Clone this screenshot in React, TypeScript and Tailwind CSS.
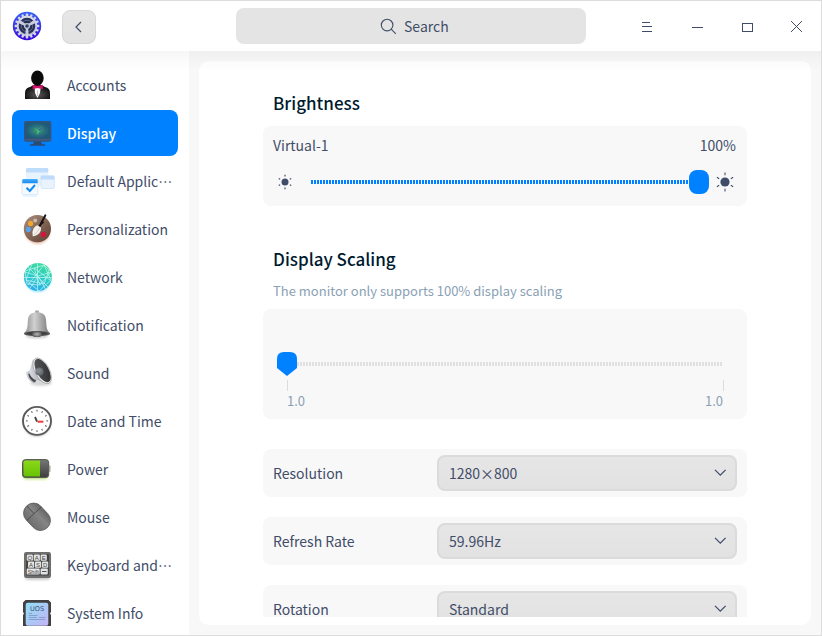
import type { ReactNode } from 'react';

const INK = '#414d68';

function Logo() {
  const teeth = Array.from({ length: 16 }, (_, i) => i * 22.5);
  return (
    <svg width="30" height="30" viewBox="-15 -15 30 30">
      <defs>
        <linearGradient id="logoBlue" x1="0" y1="0" x2="0" y2="1">
          <stop offset="0" stopColor="#3a63f5" />
          <stop offset="1" stopColor="#3b0ad8" />
        </linearGradient>
        <linearGradient id="logoGray" x1="0" y1="0" x2="0" y2="1">
          <stop offset="0" stopColor="#e0e2ea" />
          <stop offset="1" stopColor="#b4b8cc" />
        </linearGradient>
      </defs>
      <circle r="14.2" fill="url(#logoBlue)" />
      <circle r="10.4" fill="url(#logoGray)" />
      {teeth.map((a) => (
        <rect key={a} x="-1.2" y="-12.4" width="2.4" height="3.4" rx="0.6" fill="#d3d6e4" transform={`rotate(${a})`} />
      ))}
      <circle r="8.3" fill="#262f58" />
      <circle r="5.8" fill="none" stroke="#5b6488" strokeWidth="1" />
      {[60, 180, 300].map((a) => (
        <path key={a} d="M-1 0 L-1.7 -9 H1.7 L1 0Z" fill="#c9cddd" transform={`rotate(${a})`} />
      ))}
      <circle r="3" fill="#c4c8d8" />
      <circle r="1.8" fill="#343d66" />
    </svg>
  );
}

function AccountsIcon() {
  return (
    <>
      <defs>
        <radialGradient id="suit" cx=".5" cy=".7" r=".6">
          <stop offset="0" stopColor="#5a5a5a" />
          <stop offset="1" stopColor="#0c0c0c" />
        </radialGradient>
      </defs>
      <path d="M5 37V31Q5 26 10 25L14.5 22.5H20.5L25 25Q30 26 30 31V37Z" fill="url(#suit)" />
      <path d="M14.5 25H20.8L20 31L17.5 36L15 31Z" fill="#fff" />
      <ellipse cx="17.4" cy="16" rx="6.3" ry="7.6" fill="#0b0b0b" />
      <path d="M12.7 22.7L17.5 24L22.8 22.7V27.3L17.5 26L12.7 27.3Z" fill="#d3146c" />
      <path d="M17.5 28.5V34" stroke="#bbb" strokeWidth=".8" />
    </>
  );
}

function DisplayIcon() {
  return (
    <>
      <defs>
        <radialGradient id="screen">
          <stop offset="0" stopColor="#43a066" />
          <stop offset=".55" stopColor="#2a727f" />
          <stop offset="1" stopColor="#1d5a78" />
        </radialGradient>
      </defs>
      <path d="M14 31H21L22 34.3H25V35.8H10V34.3H13Z" fill="#2b4b75" />
      <rect x="4" y="11" width="27.3" height="20.8" rx="2" fill="#35537a" />
      <rect x="5.7" y="12.7" width="24" height="15.6" fill="url(#screen)" />
      <path d="M13 17L17.5 20L22.5 16L20 21L17 25L17.3 21Z" fill="#44c270" />
      <path d="M18 20L22.5 16L20 21Z" fill="#3d58b8" />
      <path d="M4.3 29.8H31" stroke="#4c5e7e" strokeWidth="1" />
    </>
  );
}

function DefaultAppsIcon() {
  return (
    <>
      <defs>
        <linearGradient id="appBar" x1="0" y1="0" x2="0" y2="1">
          <stop offset="0" stopColor="#45b2fb" />
          <stop offset="1" stopColor="#1a86f2" />
        </linearGradient>
      </defs>
      <rect x="6" y="10" width="22.3" height="18" rx="1.5" fill="#e8f3fe" />
      <path d="M6 14.6V11.4Q6 10 7.4 10H27Q28.3 10 28.3 11.4V14.6Z" fill="#c0dcfb" />
      <rect x="21" y="18" width="13.4" height="12.5" rx="1.4" fill="#e9f3fe" stroke="#cfe2f8" strokeWidth=".8" />
      <path d="M20.6 21.6V19Q20.6 17.6 22 17.6H33Q34.4 17.6 34.4 19V21.6Z" fill="#bedbfb" />
      <rect x="2" y="21.5" width="16" height="15.2" rx="1" fill="#f5faff" stroke="#c7e1fa" strokeWidth=".7" />
      <path d="M2.3 25.3V22.2Q2.3 21 3.5 21H16.5Q17.7 21 17.7 22.2V25.3Z" fill="url(#appBar)" />
      <path d="M6.5 29.7L9.8 33L15 27" fill="none" stroke="#168bf8" strokeWidth="2" />
      <path d="M3 38H17" stroke="#cbe6fc" strokeWidth=".8" />
    </>
  );
}

function PersonalizationIcon() {
  return (
    <>
      <defs>
        <linearGradient id="palette" x1="0" y1="0" x2="1" y2="1">
          <stop offset="0" stopColor="#ab8f7d" />
          <stop offset="1" stopColor="#5c3d30" />
        </linearGradient>
        <filter id="soft" x="-30%" y="-30%" width="160%" height="160%">
          <feGaussianBlur stdDeviation="1.3" />
        </filter>
      </defs>
      <ellipse cx="17.5" cy="25.5" rx="12.6" ry="12.5" fill="#d3936f" opacity=".6" filter="url(#soft)" />
      <path d="M17.3 9C25 9 31 15 31 22.7S25 36.2 17.3 36.2 3.8 30.4 3.8 22.7C3.8 15.6 9 9 17.3 9Z" fill="url(#palette)" />
      <circle cx="15.2" cy="14.6" r="2" fill="#cdb9b0" />
      <circle cx="10.6" cy="17.4" r="2.6" fill="#f0a72c" />
      <circle cx="8.4" cy="23.4" r="2.6" fill="#5aa2ec" />
      <circle cx="23.4" cy="28.4" r="2.6" fill="#d8123b" />
      <path d="M25.3 9.4L19.7 20" stroke="#151515" strokeWidth="2" strokeLinecap="round" />
      <path d="M21.5 14.5L19.7 20L24.4 16.5Z" fill="#151515" />
      <path d="M17.2 19.3L21 21.5Q21.3 26 17.8 28.5Q15 30.5 12.7 30.2Q11.6 26 13.5 22.5Q15 20 17.2 19.3Z" fill="#f3efeb" />
      <path d="M14 29Q18 26 19.5 22" fill="none" stroke="#c5bbb4" strokeWidth=".7" />
    </>
  );
}

function NetworkIcon() {
  return (
    <>
      <defs>
        <linearGradient id="globe" x1=".7" y1="0" x2=".4" y2="1">
          <stop offset="0" stopColor="#3fdc9d" />
          <stop offset=".5" stopColor="#2ccdc3" />
          <stop offset="1" stopColor="#2aaef0" />
        </linearGradient>
        <clipPath id="globeClip">
          <circle cx="17.9" cy="23" r="14" />
        </clipPath>
      </defs>
      <ellipse cx="17.9" cy="25.5" rx="12.8" ry="12.8" fill="#63d5ef" opacity=".6" filter="url(#soft)" />
      <circle cx="17.9" cy="23" r="14" fill="url(#globe)" />
      <g clipPath="url(#globeClip)" fill="none" stroke="#d9fbf5" strokeWidth=".75" opacity=".85">
        <path d="M4 23.5H32M17.5 9V37M5 17L24 11L31 18L20 31L7 30Z" />
        <path d="M8 13L28 33M12 10L6 26L19 37L31 26L24 11L8 31" />
        <path d="M5 18L18 22L26 36M18 22L31 18M18 22L10 34M14 14L30 26M14 14L20 31M6 26L24 30L30 14" />
      </g>
    </>
  );
}

function BellIcon() {
  return (
    <>
      <defs>
        <linearGradient id="bell" x1="0" y1="0" x2="1" y2="0">
          <stop offset="0" stopColor="#8b8b8b" />
          <stop offset=".4" stopColor="#d0d0d0" />
          <stop offset="1" stopColor="#777" />
        </linearGradient>
        <radialGradient id="clapper">
          <stop offset="0" stopColor="#b5b5b5" />
          <stop offset="1" stopColor="#5c5c5c" />
        </radialGradient>
      </defs>
      <ellipse cx="17" cy="34" rx="11" ry="2.5" fill="#999" opacity=".5" filter="url(#soft)" />
      <ellipse cx="17" cy="10" rx="2.2" ry="1.8" fill="#a8a8a8" />
      <path d="M17 10.3C24 10.3 26 14 26.2 19.5C26.4 26 27 28 30 31.5Q17 36 4 31.5C7 28 7.6 26 7.8 19.5C8 14 10 10.3 17 10.3Z" fill="url(#bell)" />
      <ellipse cx="17" cy="31.7" rx="13" ry="2.7" fill="#595959" />
      <ellipse cx="17" cy="31.4" rx="10.6" ry="1.8" fill="#3f3f3f" />
      <ellipse cx="17" cy="32.2" rx="4.8" ry="2.9" fill="url(#clapper)" />
    </>
  );
}

function SoundIcon() {
  return (
    <>
      <defs>
        <linearGradient id="cone" x1="0" y1="0" x2="1" y2="1">
          <stop offset="0" stopColor="#5c5c5e" />
          <stop offset="1" stopColor="#2a2b2e" />
        </linearGradient>
        <linearGradient id="speakerBase" x1="0" y1="0" x2="1" y2="0">
          <stop offset="0" stopColor="#d9dce2" />
          <stop offset="1" stopColor="#8d9096" />
        </linearGradient>
      </defs>
      <ellipse cx="21" cy="33" rx="11" ry="3" fill="#999" opacity=".4" filter="url(#soft)" />
      <path d="M6.2 22Q5.5 29 13.5 33L17 30L11 20Z" fill="url(#speakerBase)" />
      <path d="M9.2 23.5Q10 29 15.5 31.5" fill="none" stroke="#484a50" strokeWidth="2" />
      <path d="M13 9L9 22.5Q11 28.5 17 30L29 34Z" fill="url(#speakerBase)" />
      <ellipse cx="22.2" cy="20.8" rx="7.2" ry="14.2" transform="rotate(-29 22.2 20.8)" fill="#eaeaea" stroke="#8a8c90" strokeWidth=".5" />
      <ellipse cx="22.6" cy="20.5" rx="6" ry="12.9" transform="rotate(-29 22.6 20.5)" fill="url(#cone)" />
      <circle cx="19.4" cy="21.6" r="4" fill="#6a6f76" />
      <circle cx="18.6" cy="20.8" r="2.5" fill="#80858c" />
    </>
  );
}

function ClockIcon() {
  const marks = Array.from({ length: 12 }, (_, i) => i * 30);
  return (
    <>
      <circle cx="17" cy="24.5" r="14" fill="#888" opacity=".5" filter="url(#soft)" />
      <circle cx="17" cy="22.9" r="14" fill="#fff" stroke="#5a5a5a" strokeWidth="1.9" />
      {marks.map((a) => (
        <rect key={a} x="16.5" y="11.8" width="1" height="1.8" fill="#555" transform={`rotate(${a} 17 22.9)`} />
      ))}
      <path d="M17.6 23.7H23.4" stroke="#f03e3e" strokeWidth="2" />
      <path d="M15 19L17 23.6" stroke="#454545" strokeWidth="1.9" />
    </>
  );
}

function PowerIcon() {
  return (
    <>
      <defs>
        <linearGradient id="charge" x1="0" y1="0" x2="0" y2="1">
          <stop offset="0" stopColor="#8bd81a" />
          <stop offset="1" stopColor="#68c204" />
        </linearGradient>
        <linearGradient id="shell" x1="0" y1="0" x2="0" y2="1">
          <stop offset="0" stopColor="#777" />
          <stop offset="1" stopColor="#3e3e3e" />
        </linearGradient>
      </defs>
      <rect x="3" y="17" width="25" height="17" rx="4" fill="#b8e36e" opacity=".6" filter="url(#soft)" />
      <rect x="28.5" y="19.5" width="2.2" height="6.4" rx=".8" fill="#bbb" />
      <rect x="2.5" y="13.6" width="26.2" height="18" rx="3" fill="url(#shell)" stroke="#505a45" />
      <path d="M3.5 16.5Q3.5 14.6 5.4 14.6H20V30.6H5.4Q3.5 30.6 3.5 28.7Z" fill="url(#charge)" />
    </>
  );
}

function MouseIcon() {
  return (
    <>
      <defs>
        <linearGradient id="mouse" x1="0" y1="0" x2="1" y2="0">
          <stop offset="0" stopColor="#6e6e6e" />
          <stop offset=".6" stopColor="#858585" />
          <stop offset="1" stopColor="#666" />
        </linearGradient>
      </defs>
      <g transform="rotate(-43 17 22.8)">
        <rect x="7" y="7.8" width="20" height="30" rx="9.9" fill="url(#mouse)" stroke="#5b5b5b" strokeWidth=".8" />
        <path d="M7.2 18.5H26.8M17 8V18.5" fill="none" stroke="#444" strokeWidth=".8" />
      </g>
    </>
  );
}

function KeyboardIcon() {
  const keys = [
    [6.7, 12.5, 'Q'], [13.7, 12.5, 'A'], [20.6, 12.5, 'E'],
    [8, 19.5, 'A'], [15, 19.5, 'S'], [22, 19.5, 'D'],
  ] as const;
  return (
    <>
      <rect x="5" y="13" width="25" height="25" rx="3" fill="#999" opacity=".5" filter="url(#soft)" />
      <rect x="4" y="10" width="27" height="26" rx="2.2" fill="#6e6e6e" />
      <rect x="6" y="12" width="23" height="21.5" rx="1" fill="#444" />
      {keys.map(([x, y, label]) => (
        <g key={`${x}-${y}`}>
          <rect x={x} y={y} width="6.2" height="6.2" rx=".9" fill="#e4e4e4" />
          <text x={x + 3.1} y={y + 5.2} fontSize="6" textAnchor="middle" fill="#444" fontFamily="Liberation Sans, sans-serif">{label}</text>
        </g>
      ))}
      <rect x="6.7" y="26.5" width="13" height="6" rx=".9" fill="#e4e4e4" />
      <text x="13.2" y="31.6" fontSize="5.5" textAnchor="middle" fill="#444" fontFamily="Liberation Sans, sans-serif">Shift</text>
      <rect x="20.6" y="26.5" width="7.2" height="6" rx=".9" fill="#e4e4e4" />
      <path d="M22 29.5H26.5" stroke="#555" strokeWidth="1" />
    </>
  );
}

function SystemIcon() {
  return (
    <>
      <defs>
        <linearGradient id="chip" x1="0" y1="0" x2="1" y2="1">
          <stop offset="0" stopColor="#92def8" />
          <stop offset="1" stopColor="#c3b4f6" />
        </linearGradient>
      </defs>
      <path d="M5.5 10H28.5L31 12.5V22L30 23.5L31 25V37H3V25L4 23.5L3 22V12.5Z" fill="#414141" />
      <rect x="5.7" y="12.7" width="22.6" height="23" rx="2" fill="url(#chip)" />
      <text x="17" y="21" fontSize="6.6" textAnchor="middle" fill="#3d5874" fontFamily="DejaVu Sans, sans-serif">UOS</text>
      <path d="M8.7 23.5H12M8.7 25.5H17.5M19 27.5H25.5M8.7 27.5H17M8.7 29.5H25" stroke="#7290b4" strokeWidth=".7" />
    </>
  );
}

const items: { label: string; icon: ReactNode; active?: boolean }[] = [
  { label: 'Accounts', icon: <AccountsIcon /> },
  { label: 'Display', icon: <DisplayIcon />, active: true },
  { label: 'Default Applic…', icon: <DefaultAppsIcon /> },
  { label: 'Personalization', icon: <PersonalizationIcon /> },
  { label: 'Network', icon: <NetworkIcon /> },
  { label: 'Notification', icon: <BellIcon /> },
  { label: 'Sound', icon: <SoundIcon /> },
  { label: 'Date and Time', icon: <ClockIcon /> },
  { label: 'Power', icon: <PowerIcon /> },
  { label: 'Mouse', icon: <MouseIcon /> },
  { label: 'Keyboard and…', icon: <KeyboardIcon /> },
  { label: 'System Info', icon: <SystemIcon /> },
];

function TitleBar() {
  return (
    <header className="flex h-[50px] shrink-0 items-start bg-white">
      <div className="ml-[11px] mt-[10px]">
        <Logo />
      </div>
      <button className="ml-5 mt-[9px] flex size-[34px] items-center justify-center rounded-lg border border-[#d8d8d8] bg-gradient-to-b from-[#e6e6e6] to-[#e3e3e3]">
        <svg width="10" height="14" viewBox="0 0 10 14" fill="none" stroke={INK} strokeWidth="1.2">
          <path d="M7 2L2 7L7 12" />
        </svg>
      </button>
      <div className="ml-[140px] mt-[7px] flex h-9 w-[350px] items-center rounded-lg bg-[#e4e4e4] pl-36">
        <svg width="17" height="17" viewBox="0 0 17 17" fill="none" stroke={INK} strokeWidth="1.1">
          <circle cx="7.1" cy="7.1" r="5.8" />
          <path d="M11.2 11.2L15.8 15.8" />
        </svg>
        <span className="ml-[7px]">Search</span>
      </div>
      <svg className="ml-[46px]" width="189" height="50" viewBox="632 1 189 50" fill="none" stroke={INK} strokeWidth="1" shapeRendering="crispEdges">
        <path d="M642 22.5H650M642 26.5H652M642 31.5H652M692 27.5H703" />
        <rect x="742.5" y="23.5" width="10" height="8" />
        <path d="M791.5 21.5L802 32M801.5 21.5L791 32" />
      </svg>
    </header>
  );
}

function Sidebar() {
  return (
    <nav className="h-full w-[188px] shrink-0 bg-white pb-[9px] pl-[11px] pr-[11px]">
      <div className="flex h-full flex-col gap-0.5 overflow-hidden pt-[11px]">
        {items.map(({ label, icon, active }) => (
          <div
            key={label}
            className={`flex h-[46px] shrink-0 items-center gap-[11px] rounded-lg pl-2 ${active ? 'bg-[#0081ff] font-medium text-white' : ''}`}
          >
            <svg className="shrink-0" width="36" height="46" viewBox="0 0 36 46">
              {icon}
            </svg>
            <span className="whitespace-nowrap">{label}</span>
          </div>
        ))}
      </div>
    </nav>
  );
}

function Sun({ large = false }: { large?: boolean }) {
  const inner = large ? 6.7 : 5.6;
  const outer = large ? 9.4 : 7.2;
  return (
    <svg width="20" height="20" viewBox="-10 -10 20 20">
      <circle r={large ? 4.6 : 3.5} fill={INK} />
      {[0, 60, 120, 180, 240, 300].map((a) => (
        <path key={a} d={`M0 ${-inner}V${-outer}`} stroke={INK} strokeWidth={large ? 1.1 : 1.2} transform={`rotate(${a})`} />
      ))}
    </svg>
  );
}

function SelectRow({ label, value }: { label: string; value: string }) {
  return (
    <div className="flex h-12 shrink-0 items-center justify-between rounded-lg bg-[#f8f8f8] px-2.5">
      <span>{label}</span>
      <div className="flex h-9 w-[300px] items-center justify-between rounded-lg border-2 border-[#dbdbdb] bg-gradient-to-b from-[#e6e6e6] to-[#e2e2e2] pl-2.5 pr-2">
        <span>{value}</span>
        <svg width="14" height="10" viewBox="0 0 14 10" fill="none" stroke={INK} strokeWidth="1.3">
          <path d="M2 1.9L7.3 7.2L12.6 1.9" />
        </svg>
      </div>
    </div>
  );
}

export default function App() {
  return (
    <div
      lang="zh-CN"
      className="flex h-[636px] w-[822px] flex-col overflow-hidden border border-[#dcdcdc] bg-[#f8f8f8] font-['Noto_Sans_CJK_SC','Noto_Sans',sans-serif] text-[14px] leading-[22px] text-[#414d68]"
    >
      <TitleBar />
      <div className="relative flex h-[584px]">
        <Sidebar />
        <main className="h-[574px] flex-1 p-2.5 pb-0">
          <div className="h-[564px] rounded-[10px] bg-white pb-2">
            <div className="flex h-full flex-col overflow-hidden pl-16 pr-16 pt-7">
              <h2 className="h-[27px] shrink-0 pl-2.5 text-[17px] font-medium leading-[27px] text-[#001a2e]">Brightness</h2>
              <section className="mt-2.5 h-20 shrink-0 rounded-lg bg-[#f8f8f8] px-2.5 pt-2">
                <div className="flex justify-between pr-px">
                  <span>Virtual-1</span>
                  <span>100%</span>
                </div>
                <div className="mt-3.5 flex h-6 items-center pl-0.5">
                  <Sun />
                  <div className="ml-4 h-1 w-[378px] bg-[repeating-linear-gradient(90deg,#0081ff_0_2px,transparent_2px_3px)]" />
                  <div className="h-6 w-5 rounded-lg bg-[#0081ff]" />
                  <div className="ml-[5.5px]">
                    <Sun large />
                  </div>
                </div>
              </section>
              <h2 className="mt-[39px] h-[27px] shrink-0 pl-2.5 text-[17px] font-medium leading-[27px] text-[#001a2e]">Display Scaling</h2>
              <p className="mt-[9px] h-5 shrink-0 pl-2.5 text-[13px] leading-5 text-[#8aa1b4]">The monitor only supports 100% display scaling</p>
              <section className="mt-2 h-[110px] shrink-0 rounded-lg bg-[#f8f8f8] pl-3.5 pr-6 pt-[43px]">
                <div className="flex h-6 items-center">
                  <svg width="20" height="24" viewBox="0 0 20 24">
                    <path d="M0 7Q0 0 7 0H13Q20 0 20 7V16L10 24L0 16Z" fill="#0081ff" />
                  </svg>
                  <div className="h-1 w-[425px] bg-[repeating-linear-gradient(90deg,#e0e0e0_0_2px,transparent_2px_3px)]" />
                </div>
                <div className="-mr-px ml-2.5 mt-1 flex h-[11px] justify-between">
                  <span className="w-px bg-[#dcdcdc]" />
                  <span className="w-px bg-[#dcdcdc]" />
                </div>
                <div className="ml-2.5 flex justify-between text-[13px] leading-5 text-[#8aa1b4]">
                  <span>1.0</span>
                  <span>1.0</span>
                </div>
              </section>
              <div className="mt-[30px] flex shrink-0 flex-col gap-5">
                <SelectRow label="Resolution" value="1280×800" />
                <SelectRow label="Refresh Rate" value="59.96Hz" />
                <SelectRow label="Rotation" value="Standard" />
              </div>
            </div>
          </div>
        </main>
        <div className="pointer-events-none absolute inset-x-0 top-0 h-5 bg-gradient-to-b from-black/[0.035] to-transparent" />
      </div>
    </div>
  );
}
